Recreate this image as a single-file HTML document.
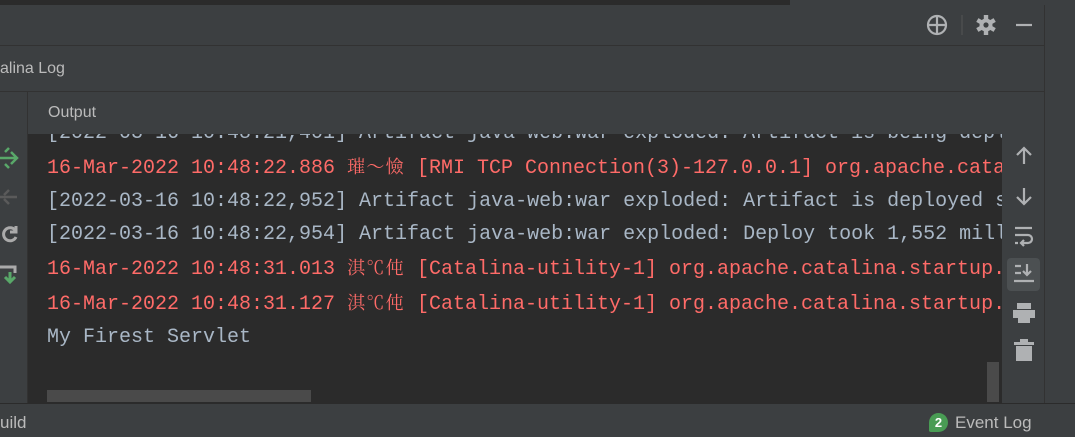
<!DOCTYPE html>
<html><head><meta charset="utf-8"><style>
body{margin:0;width:1075px;height:437px;background:#3c3f41;position:relative;overflow:hidden;font-family:"Liberation Sans",sans-serif}
.a{position:absolute}
.mono{font-family:"Liberation Mono",monospace;font-size:20px;white-space:pre;color:#a9b7c6}
.r{color:#ff6b68}
.cj{font-family:"Noto Serif CJK SC",serif;font-size:18px;letter-spacing:1.3px}
</style></head><body>
<div class="a" style="left:0;top:0;width:1075px;height:5px;background:#2b2b2b"></div>
<div class="a" style="left:790px;top:0;width:285px;height:5px;background:#3c3f41"></div>
<div class="a" style="left:0;top:45px;width:1045px;height:1px;background:#323232"></div>
<div class="a" style="left:0;top:91px;width:1045px;height:1px;background:#323232"></div>
<div class="a" style="left:1044px;top:5px;width:1px;height:398px;background:#323232"></div>
<div class="a" style="left:0;top:60px;font-size:16px;color:#bbbbbb">alina Log</div>
<div class="a" style="left:27px;top:92px;width:1px;height:311px;background:#323232"></div>
<div class="a" style="left:48px;top:104px;font-size:16px;color:#bbbbbb">Output</div>
<div class="a" style="left:28px;top:134px;width:974px;height:269px;background:#2b2b2b;overflow:hidden">
<div class="mono" style="position:absolute;left:19px;top:-17px;line-height:33px">[2022-03-16 10:48:21,401] Artifact java-web:war exploded: Artifact is being deployed
<span class="r">16-Mar-2022 10:48:22.886 <span class="cj">璀〜憸</span> [RMI TCP Connection(3)-127.0.0.1] org.apache.catalina</span>
[2022-03-16 10:48:22,952] Artifact java-web:war exploded: Artifact is deployed s
[2022-03-16 10:48:22,954] Artifact java-web:war exploded: Deploy took 1,552 mill
<span class="r">16-Mar-2022 10:48:31.013 <span class="cj">淇℃伅</span> [Catalina-utility-1] org.apache.catalina.startup.</span>
<span class="r">16-Mar-2022 10:48:31.127 <span class="cj">淇℃伅</span> [Catalina-utility-1] org.apache.catalina.startup.</span>
My Firest Servlet</div>
<div class="a" style="left:19px;top:256px;width:264px;height:12px;background:#4a4a4a"></div>
<div class="a" style="left:959px;top:228px;width:12px;height:40px;background:#4a4a4a"></div>
</div>
<!-- left icons -->
<svg class="a" style="left:0;top:140px" width="27" height="150" fill="none" stroke-width="2.5">
<g stroke="#59a869"><path d="M0 18h16M11 12l6 6-6 6M9 8l-4 4M9 28l-4-4"/></g>
<g stroke="#5a5a5a"><path d="M0 57h17M9 50l-5 5M9 64l-5-5"/></g>
<g stroke="#aaa" stroke-width="3"><path d="M15 90a6.5 6.5 0 1 0 1 7M16 86v6h-6"/></g>
<g><path d="M0 127h15v6" stroke="#aaa" stroke-width="3"/><path d="M10 132v9M5 137l5 5 5-5" stroke="#59a869" stroke-width="3"/></g>
</svg>
<!-- top right icons -->
<svg class="a" style="left:920px;top:10px" width="120" height="30" fill="none" stroke="#afb1b3" stroke-width="2.2">
<circle cx="17" cy="15" r="9"/><path d="M17 6v18M8 15h18"/>
<path d="M42 5v20" stroke="#555" stroke-width="1"/>
<g transform="translate(66 15)" fill="#afb1b3" stroke="none">
<circle r="6.5"/>
<rect x="-2.2" y="-10" width="4.4" height="20"/>
<rect x="-2.2" y="-10" width="4.4" height="20" transform="rotate(60)"/>
<rect x="-2.2" y="-10" width="4.4" height="20" transform="rotate(120)"/>
<circle r="2.6" fill="#3c3f41"/></g>
<path d="M96 15h16"/>
</svg>
<!-- right toolbar -->
<svg class="a" style="left:1004px;top:140px" width="40" height="230" fill="none" stroke="#afb1b3" stroke-width="2.2">
<path d="M20 8v16M13 15l7-7 7 7"/>
<path d="M20 48v16M13 57l7 7 7-7"/>
<path d="M11 88h17M11 95h13a4 4 0 0 1 0 8h-6M20 100l-3 3 3 3M11 103h3"/>
<rect x="3" y="118" width="33" height="33" rx="4" fill="#4c5052" stroke="none"/>
<path d="M11 126h6M11 133h6M10 141h20M23 124v11M19 131l4 4 4-4"/>
<path d="M13 163h14v6h-14zM9 170h22v8H9zM14 177h12v6H14z" fill="#afb1b3" stroke="none"/>
<path d="M10 202h20v3H10zM16 199h8v3h-8zM12 206h16v15H12z" fill="#afb1b3" stroke="none"/>
</svg>
<!-- status bar -->
<div class="a" style="left:0;top:403px;width:1075px;height:1px;background:#2b2b2b"></div>
<div class="a" style="left:0;top:413px;font-size:17px;color:#bbbbbb">uild</div>
<div class="a" style="left:929px;top:413px;width:19px;height:19px;border-radius:10px 10px 10px 2px;background:#499c54;color:#fff;font-size:13px;font-weight:bold;text-align:center;line-height:19px">2</div>
<div class="a" style="left:955px;top:413px;font-size:17px;color:#bbbbbb">Event Log</div>
</body></html>
